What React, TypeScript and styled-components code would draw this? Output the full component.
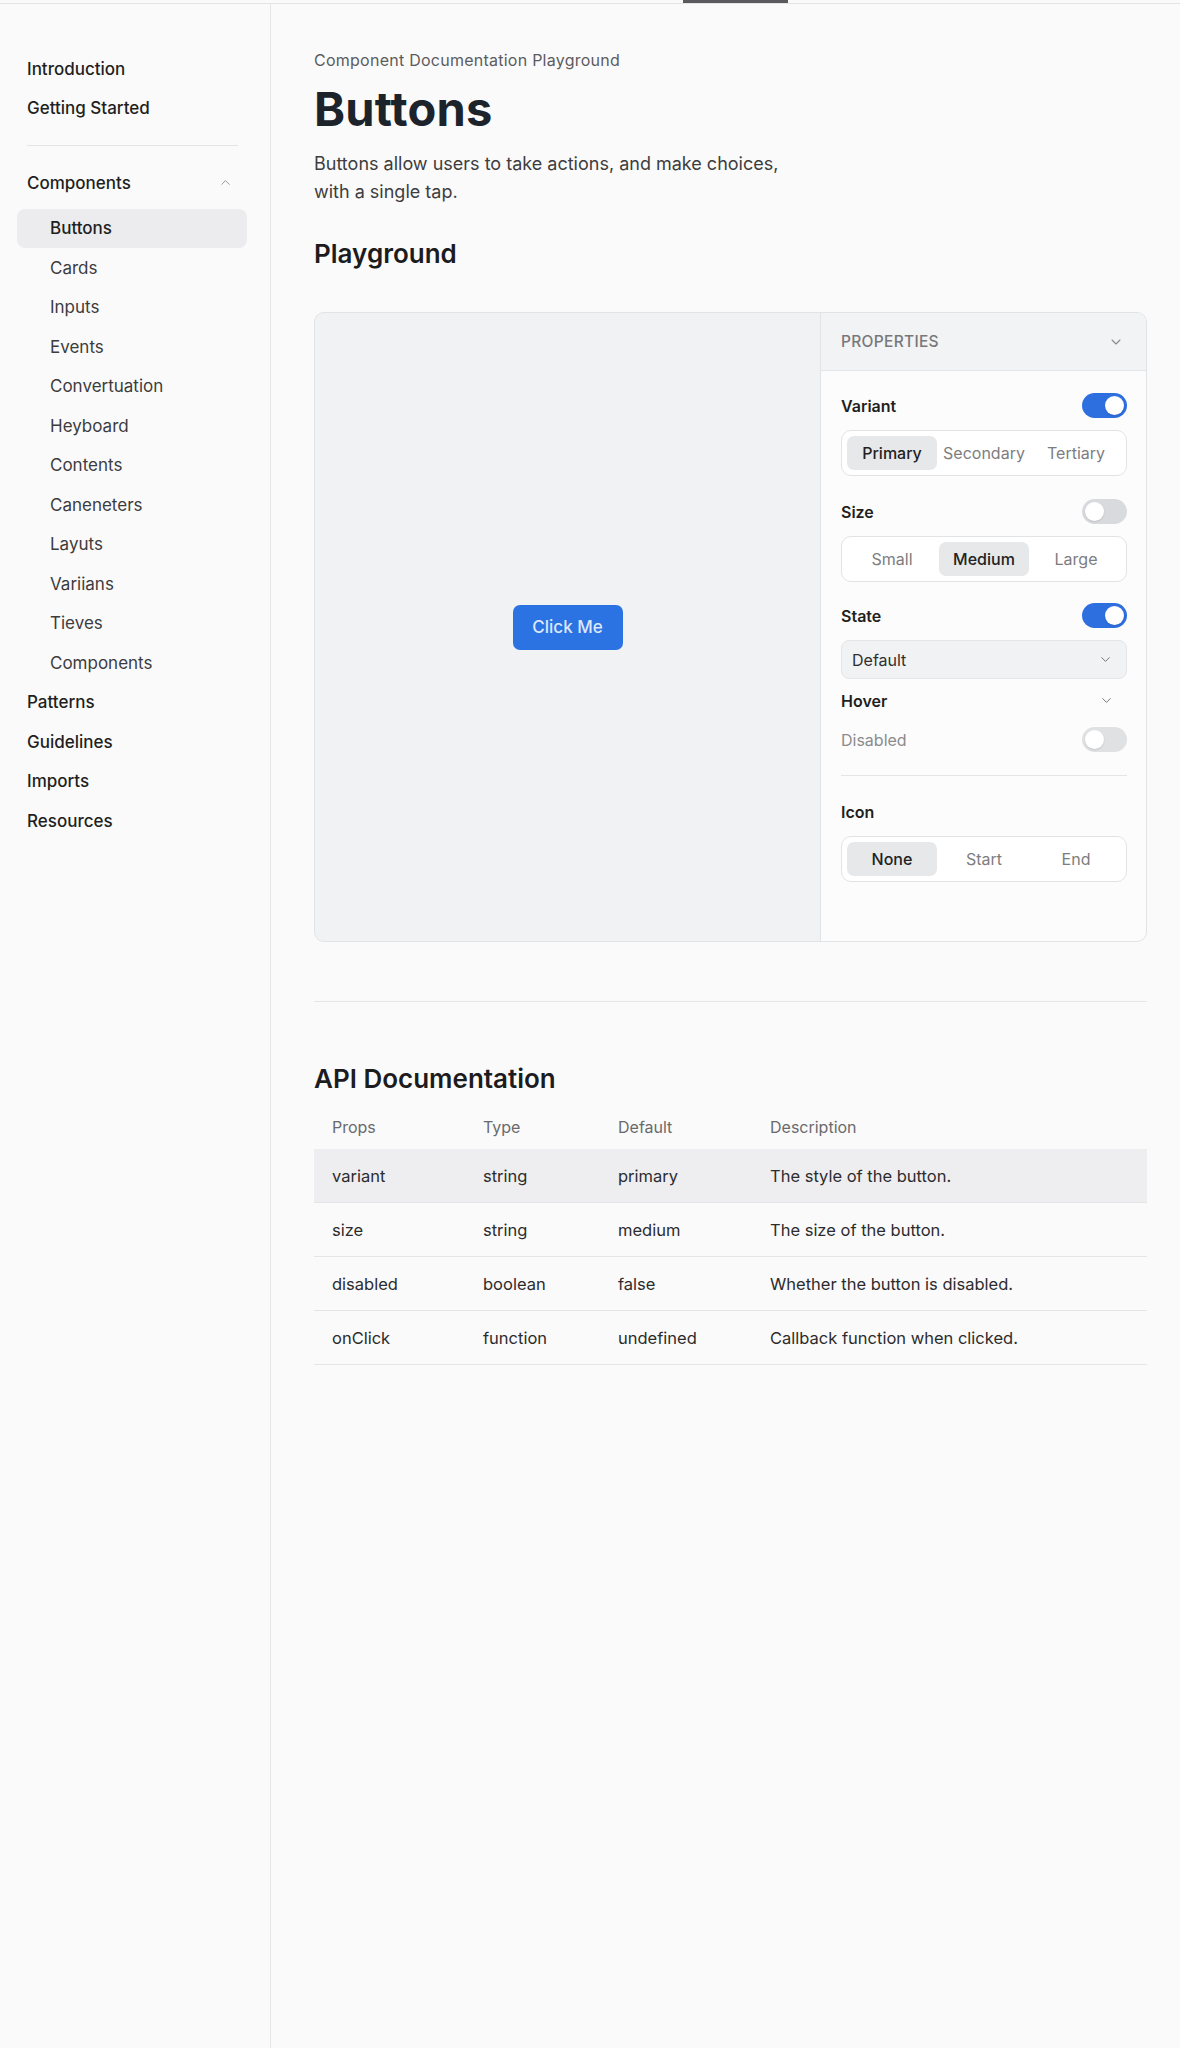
import React, { FC } from "react";
import styled, { createGlobalStyle } from "styled-components";
import { ChevronDown, ChevronUp } from "lucide-react";

const GlobalStyle = createGlobalStyle`
  * { box-sizing: border-box; }
  html, body {
    margin: 0;
    padding: 0;
    background: #fafafa;
  }
  body {
    font-family: Inter, "Noto Sans", "Liberation Sans", sans-serif;
    color: #222;
    -webkit-font-smoothing: antialiased;
  }
`;

type NavEntry = { label: string; active?: boolean };

const topLinks = ["Introduction", "Getting Started"];
const componentLinks: NavEntry[] = [
  { label: "Buttons", active: true },
  { label: "Cards" },
  { label: "Inputs" },
  { label: "Events" },
  { label: "Convertuation" },
  { label: "Heyboard" },
  { label: "Contents" },
  { label: "Caneneters" },
  { label: "Layuts" },
  { label: "Variians" },
  { label: "Tieves" },
  { label: "Components" },
];
const bottomLinks = ["Patterns", "Guidelines", "Imports", "Resources"];

type ApiRow = { prop: string; type: string; def: string; desc: string };

const apiRows: ApiRow[] = [
  { prop: "variant", type: "string", def: "primary", desc: "The style of the button." },
  { prop: "size", type: "string", def: "medium", desc: "The size of the button." },
  { prop: "disabled", type: "boolean", def: "false", desc: "Whether the button is disabled." },
  { prop: "onClick", type: "function", def: "undefined", desc: "Callback function when clicked." },
];

const Toggle: FC<{ on?: boolean; faded?: boolean }> = ({ on, faded }) => (
  <ToggleTrack $on={on} $faded={faded}>
    <ToggleKnob />
  </ToggleTrack>
);

const Segmented: FC<{ options: string[]; active: string }> = ({ options, active }) => (
  <SegmentGroup>
    {options.map((o) => (
      <SegmentOption key={o} $active={o === active}>
        {o}
      </SegmentOption>
    ))}
  </SegmentGroup>
);

const App: FC = () => {
  return (
    <>
      <GlobalStyle />
      <TopStrip>
        <TopIndicator />
      </TopStrip>
      <Shell>
        <Sidebar>
          {topLinks.map((l) => (
            <NavItem key={l}>{l}</NavItem>
          ))}
          <NavDivider />
          <NavItem>
            Components
            <ChevronUp size={15} strokeWidth={1.6} color="#9a9a9a" />
          </NavItem>
          <SubList>
            {componentLinks.map((l) => (
              <NavItem key={l.label} $sub $active={l.active}>
                {l.label}
              </NavItem>
            ))}
          </SubList>
          {bottomLinks.map((l) => (
            <NavItem key={l}>{l}</NavItem>
          ))}
        </Sidebar>

        <Main>
          <Breadcrumb>Component Documentation Playground</Breadcrumb>
          <PageTitle>Buttons</PageTitle>
          <Lead>
            Buttons allow users to take actions, and make choices,
            <br />
            with a single tap.
          </Lead>
          <SectionTitle>Playground</SectionTitle>

          <PlaygroundCard>
            <Preview>
              <DemoButton>Click Me</DemoButton>
            </Preview>
            <PropsPanel>
              <PanelHeader>
                PROPERTIES
                <ChevronDown size={16} strokeWidth={1.6} color="#8a8a8a" />
              </PanelHeader>
              <PanelBody>
                <FieldHead>
                  <FieldLabel>Variant</FieldLabel>
                  <Toggle on />
                </FieldHead>
                <Segmented options={["Primary", "Secondary", "Tertiary"]} active="Primary" />

                <FieldHead $space={23}>
                  <FieldLabel>Size</FieldLabel>
                  <Toggle />
                </FieldHead>
                <Segmented options={["Small", "Medium", "Large"]} active="Medium" />

                <FieldHead $space={21}>
                  <FieldLabel>State</FieldLabel>
                  <Toggle on />
                </FieldHead>
                <SelectBox>
                  Default
                  <ChevronDown size={15} strokeWidth={1.6} color="#777" />
                </SelectBox>

                <FieldHead $space={9} $after={14}>
                  <FieldLabel>Hover</FieldLabel>
                  <ChevronWrap>
                    <ChevronDown size={15} strokeWidth={1.6} color="#777" />
                  </ChevronWrap>
                </FieldHead>
                <FieldHead $after={23}>
                  <FieldLabel $muted>Disabled</FieldLabel>
                  <Toggle faded />
                </FieldHead>

                <PanelDivider />

                <FieldHead $space={23}>
                  <FieldLabel>Icon</FieldLabel>
                </FieldHead>
                <Segmented options={["None", "Start", "End"]} active="None" />
              </PanelBody>
            </PropsPanel>
          </PlaygroundCard>

          <SectionRule />

          <SectionTitle $top={61}>API Documentation</SectionTitle>
          <ApiTable>
            <ApiHead>
              <span>Props</span>
              <span>Type</span>
              <span>Default</span>
              <span>Description</span>
            </ApiHead>
            {apiRows.map((r, i) => (
              <ApiRowLine key={r.prop} $highlight={i === 0}>
                <span>{r.prop}</span>
                <span>{r.type}</span>
                <span>{r.def}</span>
                <span>{r.desc}</span>
              </ApiRowLine>
            ))}
          </ApiTable>
        </Main>
      </Shell>
    </>
  );
};

const TopStrip = styled.div`
  height: 4px;
  border-bottom: 1px solid #e4e4e6;
  display: flex;
`;

const TopIndicator = styled.div`
  margin-left: 683px;
  width: 105px;
  height: 3px;
  background: #5a5a5c;
`;

const Shell = styled.div`
  display: flex;
  min-height: calc(100vh - 4px);
`;

const Sidebar = styled.nav`
  width: 271px;
  flex-shrink: 0;
  border-right: 1px solid #e7e7e9;
  padding: 45px 23px 40px 17px;
  display: flex;
  flex-direction: column;
`;

const NavItem = styled.div<{ $sub?: boolean; $active?: boolean }>`
  height: 39.5px;
  display: flex;
  align-items: center;
  justify-content: space-between;
  padding: 0 14px 0 ${(p) => (p.$sub ? "33px" : "10px")};
  border-radius: 8px;
  font-size: 17px;
  font-weight: ${(p) => (p.$sub && !p.$active ? 400 : 500)};
  color: ${(p) => (p.$sub && !p.$active ? "#3c3c3e" : "#1f1f21")};
  background: ${(p) => (p.$active ? "#ececee" : "transparent")};
`;

const NavDivider = styled.div`
  height: 1px;
  background: #e4e4e6;
  margin: 17px 9px 17px 10px;
`;

const SubList = styled.div`
  display: flex;
  flex-direction: column;
  margin-top: 6px;
`;

const Main = styled.main`
  flex: 1;
  padding: 46px 33px 80px 43px;
`;

const Breadcrumb = styled.div`
  font-size: 16px;
  line-height: 20px;
  letter-spacing: 0.25px;
  color: #5c5c5e;
`;

const PageTitle = styled.h1`
  margin: 13px 0 0;
  font-size: 47px;
  line-height: 52px;
  font-weight: 700;
  color: #1c232b;
  letter-spacing: 0.2px;
`;

const Lead = styled.p`
  margin: 15px 0 0;
  font-size: 18px;
  line-height: 28px;
  color: #3d3d40;
`;

const SectionTitle = styled.h2<{ $top?: number }>`
  margin: ${(p) => p.$top ?? 32}px 0 0;
  font-size: 26px;
  line-height: 32px;
  font-weight: 600;
  color: #1c1c1e;
`;

const PlaygroundCard = styled.section`
  margin-top: 42px;
  display: flex;
  border: 1px solid #e2e3e5;
  border-radius: 10px;
  overflow: hidden;
  background: #f1f2f4;
`;

const Preview = styled.div`
  flex: 1;
  display: flex;
  align-items: center;
  justify-content: center;
`;

const DemoButton = styled.button`
  width: 110px;
  height: 45px;
  border: none;
  border-radius: 7px;
  background: #2b73e3;
  color: #dce7fb;
  font-family: inherit;
  font-size: 17px;
  font-weight: 500;
`;

const PropsPanel = styled.aside`
  width: 326px;
  flex-shrink: 0;
  border-left: 1px solid #e2e3e5;
  background: #fcfcfc;
  display: flex;
  flex-direction: column;
`;

const PanelHeader = styled.div`
  height: 58px;
  display: flex;
  align-items: center;
  justify-content: space-between;
  padding: 0 22px 0 20px;
  background: #f2f3f4;
  border-bottom: 1px solid #e4e5e7;
  font-size: 15.5px;
  font-weight: 500;
  color: #78787b;
  letter-spacing: 0.3px;
`;

const PanelBody = styled.div`
  display: flex;
  flex-direction: column;
  padding: 22px 19px 59px 20px;
`;

const FieldHead = styled.div<{ $space?: number; $after?: number }>`
  height: 25px;
  margin: ${(p) => p.$space ?? 0}px 0 ${(p) => p.$after ?? 12}px;
  display: flex;
  align-items: center;
  justify-content: space-between;
`;

const FieldLabel = styled.span<{ $muted?: boolean }>`
  font-size: 16px;
  font-weight: ${(p) => (p.$muted ? 400 : 600)};
  color: ${(p) => (p.$muted ? "#8b8b8e" : "#1f1f21")};
`;

const ToggleTrack = styled.div<{ $on?: boolean; $faded?: boolean }>`
  width: 45px;
  height: 25px;
  border-radius: 13px;
  padding: 3px;
  display: flex;
  justify-content: ${(p) => (p.$on ? "flex-end" : "flex-start")};
  background: ${(p) => (p.$on ? "#2e6fe0" : p.$faded ? "#e0e1e3" : "#d9dadd")};
`;

const ToggleKnob = styled.div`
  width: 19px;
  height: 19px;
  border-radius: 50%;
  background: #fff;
  box-shadow: 0 1px 2px rgba(0, 0, 0, 0.12);
`;

const SegmentGroup = styled.div`
  display: grid;
  grid-template-columns: repeat(3, 1fr);
  gap: 2px;
  padding: 5px;
  border: 1px solid #e2e3e5;
  border-radius: 10px;
  background: #fff;
`;

const SegmentOption = styled.div<{ $active?: boolean }>`
  height: 34px;
  display: flex;
  align-items: center;
  justify-content: center;
  border-radius: 7px;
  font-size: 16px;
  font-weight: ${(p) => (p.$active ? 500 : 400)};
  color: ${(p) => (p.$active ? "#222" : "#7d7d80")};
  background: ${(p) => (p.$active ? "#e7e8ea" : "transparent")};
`;

const SelectBox = styled.div`
  height: 39px;
  display: flex;
  align-items: center;
  justify-content: space-between;
  padding: 0 13px 0 10px;
  border: 1px solid #e4e5e7;
  border-radius: 8px;
  background: #f1f2f3;
  font-size: 16px;
  color: #2f2f31;
`;

const ChevronWrap = styled.span`
  display: flex;
  padding-right: 13px;
`;

const PanelDivider = styled.div`
  height: 1px;
  background: #e4e5e7;
`;

const SectionRule = styled.hr`
  margin: 59px 0 0;
  border: none;
  height: 1px;
  background: #e6e6e8;
`;

const ApiTable = styled.div`
  margin-top: 10px;
  display: flex;
  flex-direction: column;
`;

const tableColumns = "151px 135px 152px 1fr";

const ApiHead = styled.div`
  display: grid;
  grid-template-columns: ${tableColumns};
  height: 44px;
  align-items: center;
  padding-left: 18px;
  font-size: 16px;
  color: #6a6a6d;
`;

const ApiRowLine = styled.div<{ $highlight?: boolean }>`
  display: grid;
  grid-template-columns: ${tableColumns};
  height: 54px;
  align-items: center;
  padding-left: 18px;
  font-size: 16.5px;
  color: #2c2c2e;
  border-bottom: 1px solid #e5e5e7;
  background: ${(p) => (p.$highlight ? "#eeeef0" : "transparent")};
`;

export default App;
